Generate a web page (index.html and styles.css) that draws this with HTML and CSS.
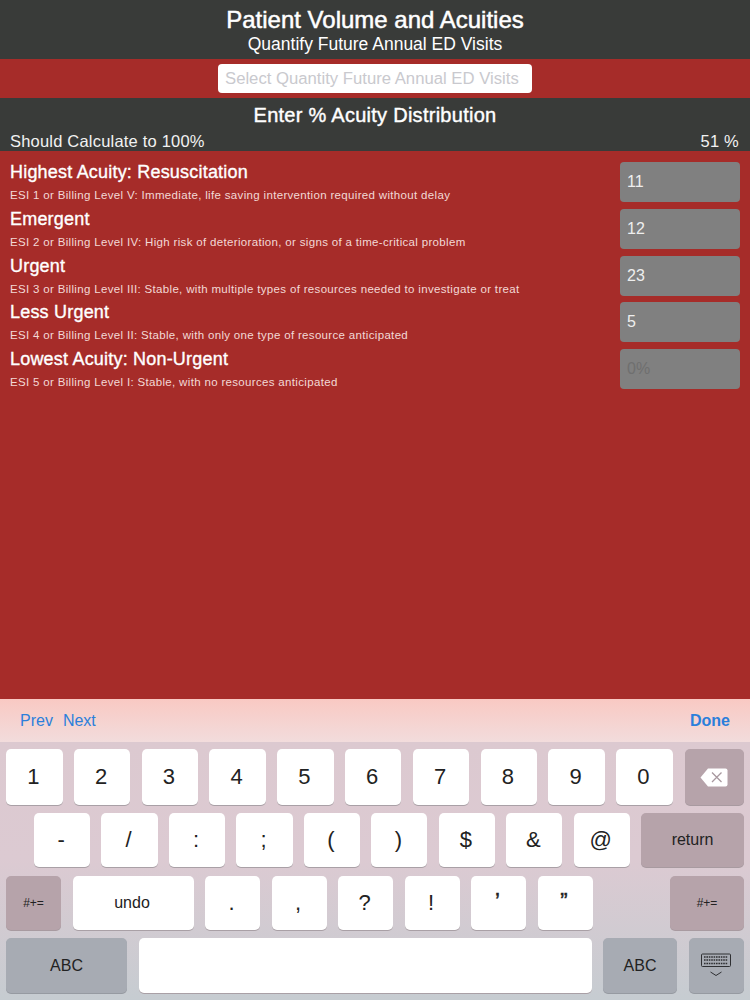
FILE: index.html
```html
<!DOCTYPE html>
<html lang="en">
<head>
    <meta charset="UTF-8">
    <meta name="viewport" content="width=device-width, initial-scale=1.0">
    <title>Patient Volume and Acuities</title>
    <link rel="stylesheet" href="styles.css">
</head>
<body>
    <!-- Title -->
    <header class="title-bar">
        <h1 class="title">Patient Volume and Acuities</h1>
        <p class="subtitle">Quantify Future Annual ED Visits</p>
    </header>

    <div class="visits-bar">
        <input class="visits-input" type="text" placeholder="Select Quantity Future Annual ED Visits">
    </div>

    <div class="total-bar">
        <h2 class="total-title">Enter % Acuity Distribution</h2>
        <div class="total-row">
            <span>Should Calculate to 100%</span>
            <span>51 %</span>
        </div>
    </div>

    <!-- Acuity rows -->
    <main class="acuity-list">
        <div class="acuity-row">
            <div class="acuity-text">
                <div class="acuity-name">Highest Acuity: Resuscitation</div>
                <div class="acuity-desc">ESI 1 or Billing Level V: Immediate, life saving intervention required without delay</div>
            </div>
            <input class="acuity-input" type="text" value="11" placeholder="0%">
        </div>
        <div class="acuity-row">
            <div class="acuity-text">
                <div class="acuity-name">Emergent</div>
                <div class="acuity-desc">ESI 2 or Billing Level IV: High risk of deterioration, or signs of a time-critical problem</div>
            </div>
            <input class="acuity-input" type="text" value="12" placeholder="0%">
        </div>
        <div class="acuity-row">
            <div class="acuity-text">
                <div class="acuity-name">Urgent</div>
                <div class="acuity-desc">ESI 3 or Billing Level III: Stable, with multiple types of resources needed to investigate or treat</div>
            </div>
            <input class="acuity-input" type="text" value="23" placeholder="0%">
        </div>
        <div class="acuity-row">
            <div class="acuity-text">
                <div class="acuity-name">Less Urgent</div>
                <div class="acuity-desc">ESI 4 or Billing Level II: Stable, with only one type of resource anticipated</div>
            </div>
            <input class="acuity-input" type="text" value="5" placeholder="0%">
        </div>
        <div class="acuity-row">
            <div class="acuity-text">
                <div class="acuity-name">Lowest Acuity: Non-Urgent</div>
                <div class="acuity-desc">ESI 5 or Billing Level I: Stable, with no resources anticipated</div>
            </div>
            <input class="acuity-input" type="text" placeholder="0%">
        </div>
    </main>

    <!-- Keyboard toolbar -->
    <div class="toolbar">
        <span class="tool-link">Prev</span>
        <span class="tool-link">Next</span>
        <span class="tool-link tool-done">Done</span>
    </div>

    <!-- Keyboard -->
    <div class="keyboard">
        <div class="key-row row-one">
            <div class="key">1</div>
            <div class="key">2</div>
            <div class="key">3</div>
            <div class="key">4</div>
            <div class="key">5</div>
            <div class="key">6</div>
            <div class="key">7</div>
            <div class="key">8</div>
            <div class="key">9</div>
            <div class="key">0</div>
            <div class="key key-dark key-back">
                <svg width="28" height="19" viewBox="0 0 28 19">
                    <path d="M8 0.5H25.5a2 2 0 0 1 2 2V16.5a2 2 0 0 1-2 2H8L0.5 9.5Z" fill="#fff"/>
                    <path d="M12 4.5l9.5 9.5M21.5 4.5L12 14" stroke="#a8989f" stroke-width="1.3" fill="none"/>
                </svg>
            </div>
        </div>
        <div class="key-row row-two">
            <div class="key">-</div>
            <div class="key">/</div>
            <div class="key">:</div>
            <div class="key">;</div>
            <div class="key">(</div>
            <div class="key">)</div>
            <div class="key">$</div>
            <div class="key">&amp;</div>
            <div class="key">@</div>
            <div class="key key-dark key-return">return</div>
        </div>
        <div class="key-row row-three">
            <div class="key key-dark key-shift">#+=</div>
            <div class="key key-undo">undo</div>
            <div class="key">.</div>
            <div class="key">,</div>
            <div class="key">?</div>
            <div class="key">!</div>
            <div class="key key-quote">’</div>
            <div class="key key-quote">”</div>
            <div class="key key-dark key-shift key-shift-right">#+=</div>
        </div>
        <div class="key-row row-four">
            <div class="key key-slate key-abc-left">ABC</div>
            <div class="key key-space"></div>
            <div class="key key-slate key-abc-right">ABC</div>
            <div class="key key-slate key-hide">
                <svg width="32" height="26" viewBox="0 0 32 26">
                    <rect x="1.5" y="1" width="29" height="12.5" rx="1" fill="none" stroke="#2f3033" stroke-width="1"/>
                    <path d="M4 4h24M4 7h24M4 10.500h24" stroke="#2f3033" stroke-width="1.6" stroke-dasharray="1.6 0.8" fill="none"/>
                    <path d="M10.500 19l5.500 3.500 5.500-3.500" stroke="#2f3033" stroke-width="1" fill="none"/>
                </svg>
            </div>
        </div>
    </div>
</body>
</html>
```

FILE: styles.css
```css
* {
    box-sizing: border-box;
}
html, body {
    margin: 0;
    padding: 0;
    width: 750px;
    height: 1000px;
    overflow: hidden;
}
body {
    display: flex;
    flex-direction: column;
    background: #a62c29;
    color: #fff;
    font-family: "Liberation Sans", Arial, sans-serif;
}

/* top bars */
.title-bar {
    height: 59px;
    padding-top: 6px;
    background: #393b39;
    text-align: center;
}
.title {
    margin: 0;
    font-size: 24px;
    line-height: 28px;
    font-weight: 400;
    -webkit-text-stroke: 0.5px #fff;
}
.subtitle {
    margin: 0;
    font-size: 17.500px;
    line-height: 21px;
}
.visits-bar {
    height: 39px;
    display: flex;
    justify-content: center;
    padding-top: 5px;
}
.visits-input {
    width: 314px;
    height: 29px;
    padding: 0 7px;
    border: none;
    border-radius: 4px;
    background: #fff;
    font-family: inherit;
    font-size: 16.700px;
}
.visits-input::placeholder {
    color: #c9c9ce;
    opacity: 1;
}
.total-bar {
    height: 53px;
    background: #393b39;
}
.total-title {
    margin: 0;
    padding-top: 5px;
    height: 33px;
    text-align: center;
    font-size: 20px;
    line-height: 24px;
    font-weight: 400;
    letter-spacing: 0.27px;
    -webkit-text-stroke: 0.4px #fff;
}
.total-row {
    display: flex;
    justify-content: space-between;
    padding: 0 11px 0 10px;
    font-size: 16.500px;
    line-height: 20px;
    letter-spacing: 0.2px;
    color: #f2f2f2;
}

/* acuity rows */
.acuity-list {
    flex: 1;
    display: flex;
    flex-direction: column;
    gap: 6.900px;
    padding: 10.800px 10px 0;
}
.acuity-row {
    display: flex;
    justify-content: space-between;
    height: 40px;
}
.acuity-name {
    font-size: 18px;
    line-height: 20px;
    margin-bottom: 5px;
    letter-spacing: 0.2px;
    -webkit-text-stroke: 0.35px #fff;
}
.acuity-desc {
    font-size: 11.500px;
    line-height: 16px;
    letter-spacing: 0.33px;
    color: #f3d9d6;
}
.acuity-input {
    width: 120px;
    height: 40px;
    padding: 0 7px;
    border: none;
    border-radius: 4px;
    background: #808080;
    color: #eee;
    font-family: inherit;
    font-size: 16px;
}
.acuity-input::placeholder {
    color: #6f6f6f;
    opacity: 1;
}

/* keyboard */
.toolbar {
    height: 43px;
    display: flex;
    align-items: center;
    gap: 10px;
    padding: 0 20px;
    background: linear-gradient(#f9c9c3, #f2dcdc);
    font-size: 16px;
}
.tool-link {
    color: #2b7fdb;
}
.tool-done {
    margin-left: auto;
    font-weight: 700;
}
.keyboard {
    height: 258px;
    padding-top: 7px;
    background: linear-gradient(#dcc9d0, #dccad2 45%, #c6ccd1);
    color: #222;
}
.key-row {
    display: flex;
    padding: 0 6px;
}
.row-one {
    height: 56px;
    gap: 11.300px;
    margin-bottom: 8px;
}
.row-two {
    height: 54px;
    gap: 11.300px;
    padding-left: 34px;
    margin-bottom: 9px;
}
.row-three {
    height: 54px;
    gap: 11.500px;
    margin-bottom: 8px;
}
.row-four {
    height: 55px;
    gap: 11.500px;
}
.key {
    width: 56.500px;
    display: flex;
    align-items: center;
    justify-content: center;
    padding-right: 2px;
    border-radius: 5px;
    background: #fff;
    box-shadow: 0 1px 0 #a9a0a6;
    font-size: 22px;
}
.row-two .key {
    width: 56.200px;
}
.row-three .key {
    width: 55px;
}
.row-two .key-return {
    width: 103px;
}
.key-dark {
    padding-right: 0;
    background: #b6a3aa;
    box-shadow: 0 1px 0 #a89aa0;
    font-size: 16px;
}
.key-slate {
    padding-right: 0;
    background: #a7abb3;
    box-shadow: 0 1px 0 #969aa1;
    font-size: 16px;
}
.key-back {
    width: 59px;
    margin-left: 1px;
}
.row-three .key-shift {
    font-size: 12px;
}
.row-three .key-undo {
    width: 121px;
    font-size: 16px;
}
.key-quote {
    align-items: flex-start;
    padding-top: 12px;
    -webkit-text-stroke: 0.5px #222;
}
.row-three .key-shift-right {
    width: 74px;
    margin-left: auto;
}
.key-abc-left {
    width: 121px;
}
.key-space {
    width: 453px;
}
.key-abc-right {
    width: 74px;
}
.key-hide {
    width: 55px;
}
```
